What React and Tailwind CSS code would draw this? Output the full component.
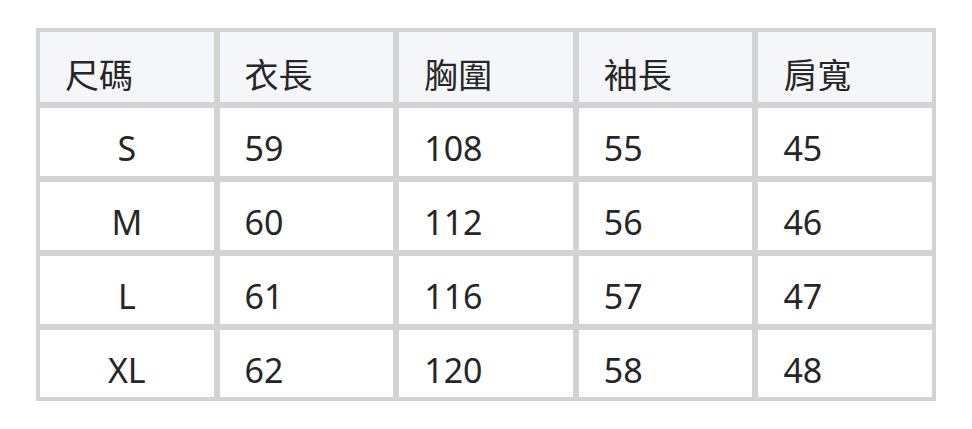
export default function App() {
  const headers = ["尺碼", "衣長", "胸圍", "袖長", "肩寬"];
  const rows = [
    ["S", "59", "108", "55", "45"],
    ["M", "60", "112", "56", "46"],
    ["L", "61", "116", "57", "47"],
    ["XL", "62", "120", "58", "48"],
  ];
  return (
    <div className="w-[972px] h-[429px] bg-white pt-[28px] pl-[36px]" style={{ fontFamily: '"Noto Sans", "Noto Sans CJK TC", sans-serif' }}>
      <div className="w-[900px] bg-[#d3d3d3] p-[4px] grid grid-cols-5 gap-[6px] grid-rows-[70px_68px_68px_68px_67px] text-[34px] text-[#262626]">
        {headers.map((h) => (
          <div key={h} className="bg-[#f5f6fa] flex items-center pl-[25px] pt-[15px] leading-none">
            {h}
          </div>
        ))}
        {rows.map((r) =>
          r.map((c, i) => (
            <div
              key={r[0] + i}
              className={`bg-white flex items-center pt-[12px] leading-none ${i === 0 ? "justify-center" : "pl-[25px]"}`}
            >
              {c}
            </div>
          ))
        )}
      </div>
    </div>
  );
}
